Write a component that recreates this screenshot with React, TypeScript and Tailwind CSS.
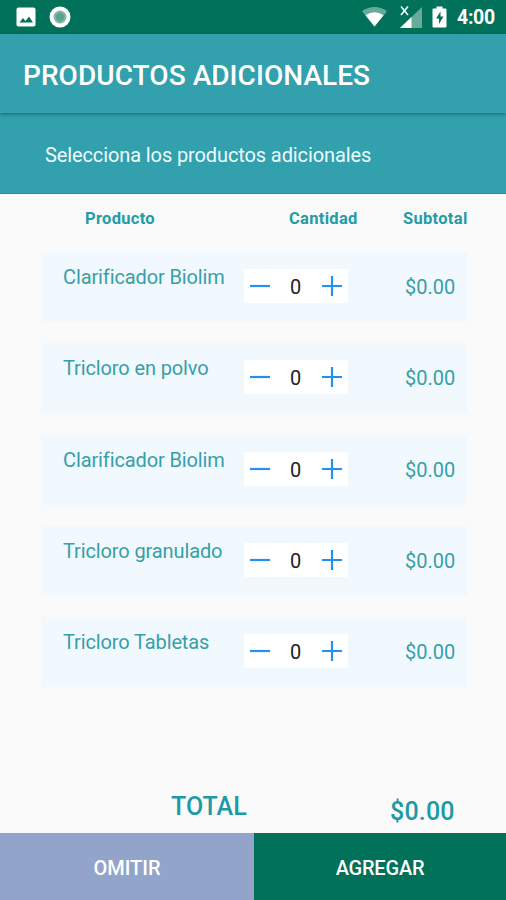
import React, { useState } from 'react';

const PRODUCTS = [
    { id: 1, name: 'Clarificador Biolim', price: 0 },
    { id: 2, name: 'Tricloro en polvo', price: 0 },
    { id: 3, name: 'Clarificador Biolim', price: 0 },
    { id: 4, name: 'Tricloro granulado', price: 0 },
    { id: 5, name: 'Tricloro Tabletas', price: 0 },
];

const money = (value: number) => `$${value.toFixed(2)}`;

const StatusBar: React.FC = () => (
    <div className="h-[34px] bg-[#017259] flex items-center justify-between pl-4 pr-[11px] text-white">
        <div className="flex items-center gap-[13px]">
            <svg className="w-5 h-5" viewBox="0 0 20 20">
                <rect x="0.5" y="0.5" width="19" height="19" rx="2" fill="#fff" />
                <path d="M3.5 15.5 7 11l2.5 3 3.5-4.5 4 6z" fill="#017259" />
            </svg>
            <svg className="w-[22px] h-[22px]" viewBox="0 0 22 22">
                <circle cx="11" cy="11" r="10.5" fill="#fff" />
                <circle cx="11" cy="11" r="6.5" fill="#7fb8a8" />
                <circle cx="11" cy="11" r="4.2" fill="#5aa28f" />
            </svg>
        </div>
        <div className="flex items-center">
            <svg className="w-[25px] h-5 mr-3" viewBox="0 0 25 20">
                <path d="M0 4.2Q12.5-4 25 4.2L12.5 19.5z" fill="#fff" fillOpacity="0.4" />
                <path d="M3.5 8.2Q12.5 2.4 21.5 8.2L12.5 19.5z" fill="#fff" />
            </svg>
            <svg className="w-[23px] h-[23px] mr-[10px]" viewBox="0 0 23 23">
                <path d="M23 1v21H1z" fill="#fff" fillOpacity="0.4" />
                <path d="M12.5 11V22H1z" fill="#fff" />
                <path d="M0 0h11v10.5H0z" fill="#017259" />
                <path d="M2 0.5l7 8.500M9 0.500L2 9" stroke="#fff" strokeWidth="1.6" />
            </svg>
            <svg className="w-[15px] h-[22px] mr-[10px]" viewBox="0 0 15 22">
                <path d="M4.5 0.5h6v2h3q1 0 1 1V20.5q0 1-1 1h-12q-1 0-1-1V3.5q0-1 1-1h3z" fill="#fff" />
                <path d="M8.5 5.5 4 12.5h3v5.5l4.5-7.5h-3z" fill="#017259" />
            </svg>
            <span className="text-[19.5px] leading-[34px] font-bold w-[38px] whitespace-nowrap tracking-[-0.3px] pt-[2px]">4:00</span>
        </div>
    </div>
);

interface StepperProps {
    value: number;
    onChange: (value: number) => void;
}

const Stepper: React.FC<StepperProps> = ({ value, onChange }) => (
    <div className="w-[104px] h-[34px] bg-white flex items-center justify-between px-[6px]">
        <button aria-label="Quitar" onClick={() => onChange(Math.max(0, value - 1))}>
            <svg className="w-5 h-5 block" viewBox="0 0 20 20">
                <path d="M0 10h20" stroke="#2490f2" strokeWidth="2.2" />
            </svg>
        </button>
        <span className="text-[20px] leading-[34px] text-[#222] pt-[2px] pr-px">{value}</span>
        <button aria-label="Agregar" onClick={() => onChange(value + 1)}>
            <svg className="w-5 h-5 block" viewBox="0 0 20 20">
                <path d="M0 10h20M10 0v20" stroke="#2490f2" strokeWidth="2.2" />
            </svg>
        </button>
    </div>
);

export default function App() {
    const [quantities, setQuantities] = useState<Record<number, number>>({});

    const total = PRODUCTS.reduce((sum, p) => sum + p.price * (quantities[p.id] ?? 0), 0);

    return (
        <div className="w-[506px] h-[900px] bg-[#fafafa] flex flex-col overflow-hidden font-['Roboto',sans-serif]">
            <StatusBar />

            {/* Toolbar */}
            <header className="h-[79px] bg-[#32a0ad] pl-[23px] flex items-center relative shadow-[0_1px_4px_rgba(0,50,60,0.55)]">
                <h1 className="text-[28px] leading-8 font-medium text-white whitespace-nowrap pt-[5px] tracking-[0.05px]">PRODUCTOS ADICIONALES</h1>
            </header>
            <div className="h-[81px] bg-[#32a0ad] border-b border-[#1796a5] pl-[45px] flex items-center">
                <p className="text-[20px] leading-6 text-[#effcfd] whitespace-nowrap pt-1 tracking-[-0.11px]">Selecciona los productos adicionales</p>
            </div>

            {/* Column titles */}
            <div className="h-[58px] pt-[13px] flex text-[16.5px] leading-6 font-bold text-[#239ca6] whitespace-nowrap tracking-[0.3px]">
                <span className="w-[204px] ml-[85px]">Producto</span>
                <span className="w-[114px]">Cantidad</span>
                <span>Subtotal</span>
            </div>

            <div className="flex flex-col gap-[21.3px] pl-[41px] pr-[39px]">
                {PRODUCTS.map((product) => {
                    const quantity = quantities[product.id] ?? 0;
                    return (
                        <div key={product.id} className="h-[70px] bg-[#f1f9ff] pl-[22px] flex items-start">
                            <span className="w-[181px] pt-[13px] text-[20px] leading-6 text-[#369fa7] whitespace-nowrap tracking-[-0.12px]">{product.name}</span>
                            <div className="pt-[17px]">
                                <Stepper
                                    value={quantity}
                                    onChange={(value) => setQuantities({ ...quantities, [product.id]: value })}
                                />
                            </div>
                            <span className="ml-[57px] pt-[23px] text-[20px] leading-6 text-[#369fa7]">{money(product.price * quantity)}</span>
                        </div>
                    );
                })}
            </div>

            <div className="flex-1" />

            <div className="flex items-start h-[41px] text-[25px] leading-[30px] font-medium text-[#1c9aa5]">
                <span className="w-[219px] ml-[171px]">TOTAL</span>
                <span className="pt-[5px] tracking-[0.2px]">{money(total)}</span>
            </div>

            <div className="flex h-[67px] text-[20px] font-medium text-white">
                <button className="w-[254px] bg-[#92a4ca] pt-[2px]">OMITIR</button>
                <button className="flex-1 bg-[#017259] pt-[2px] tracking-[-0.2px]">AGREGAR</button>
            </div>
        </div>
    );
}
